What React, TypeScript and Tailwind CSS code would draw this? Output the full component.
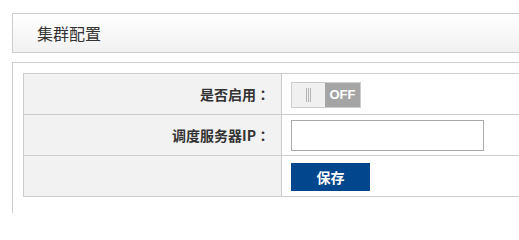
import React from "react";

export default function App() {
  const cjk = { fontFamily: '"Noto Sans CJK SC", "Liberation Sans", sans-serif' };
  const colon = { fontFamily: '"Noto Sans CJK TC", sans-serif' };
  return (
    <div className="w-[519px] h-[213px] overflow-hidden bg-white pt-[13px] pl-[12px]" style={cjk}>
      <div className="w-[540px]">
        <div className="h-[40px] border border-[#cccccc] bg-gradient-to-b from-white to-[#f1f1f1] flex items-center pl-[24px] text-[16px] text-[#333333]">
          集群配置
        </div>
        <div className="mt-[9px] border border-[#cccccc] pt-[10px] pl-[10px] pb-[20px]">
          <div className="border-t border-l border-[#cccccc]">
            <div className="flex border-b border-[#cccccc] h-[41px]">
              <div className="w-[258px] bg-[#f2f2f2] border-r border-[#cccccc] flex items-center justify-end pr-[11px] text-[14px] font-bold text-[#333333]">
                是否启用<span style={colon}>：</span>
              </div>
              <div className="flex-1 pl-[9px] pt-[8px]">
                <div className="flex w-[70px] h-[26px] border border-[#cccccc]">
                  <div className="w-[33px] bg-[#f0f0f0] flex items-center justify-center gap-[1px]">
                    <span className="w-[1px] h-[14px] bg-[#b5b5b5]" />
                    <span className="w-[1px] h-[14px] bg-[#b5b5b5]" />
                    <span className="w-[1px] h-[14px] bg-[#b5b5b5]" />
                  </div>
                  <div className="flex-1 bg-[#a5a5a5] flex items-center justify-center text-white font-bold text-[13px]" style={{ fontFamily: '"Liberation Sans", sans-serif' }}>
                    OFF
                  </div>
                </div>
              </div>
            </div>
            <div className="flex border-b border-[#cccccc] h-[41px]">
              <div className="w-[258px] bg-[#f2f2f2] border-r border-[#cccccc] flex items-center justify-end pr-[11px] text-[14px] font-bold text-[#333333]">
                调度服务器IP<span style={colon}>：</span>
              </div>
              <div className="flex-1 pl-[9px] pt-[5px]">
                <input type="text" className="block w-[193px] h-[31px] border border-[#aaaaaa] bg-white outline-none" />
              </div>
            </div>
            <div className="flex border-b border-[#cccccc] h-[41px]">
              <div className="w-[258px] bg-[#f2f2f2] border-r border-[#cccccc]" />
              <div className="flex-1 pl-[9px] pt-[7px]">
                <button className="w-[79px] h-[28px] bg-[#02468e] text-white font-bold text-[14px] flex items-center justify-center">
                  保存
                </button>
              </div>
            </div>
          </div>
        </div>
      </div>
    </div>
  );
}
